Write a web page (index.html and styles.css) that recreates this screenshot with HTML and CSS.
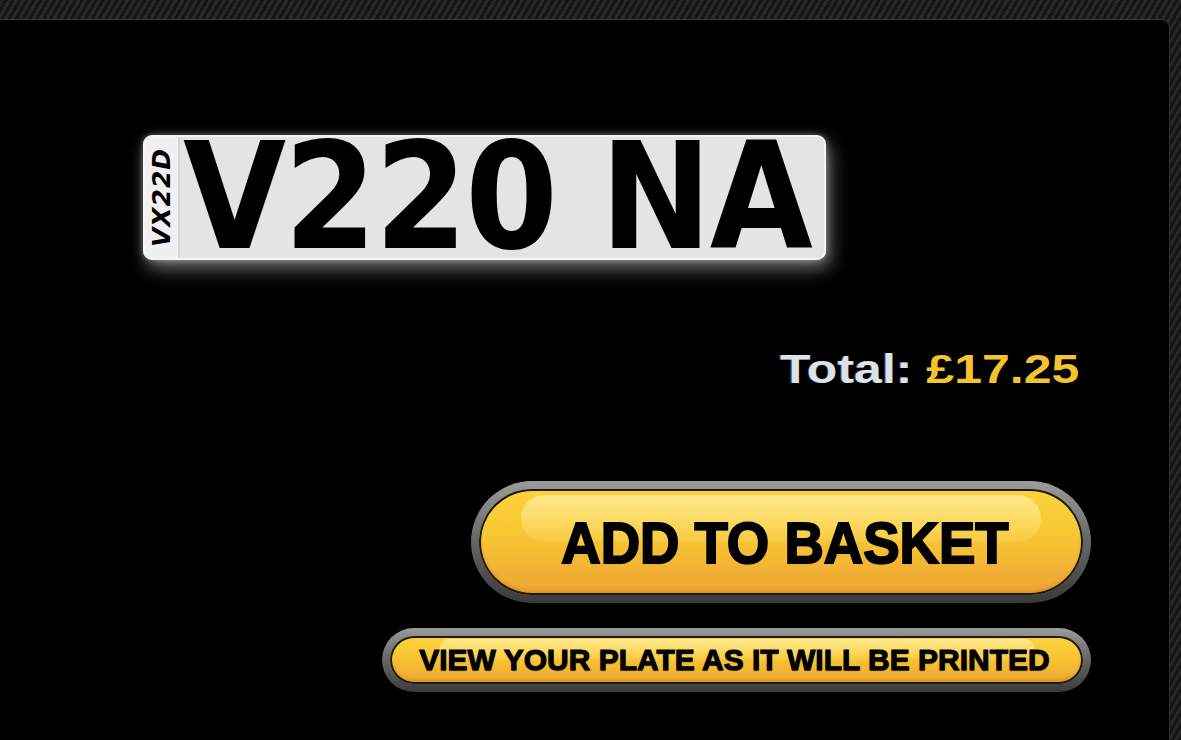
FILE: index.html
```html
<!DOCTYPE html>
<html lang="en">
<head>
    <meta charset="UTF-8">
    <meta name="viewport" content="width=device-width, initial-scale=1.0">
    <title>Plate Builder - Your Plate</title>
    <link rel="stylesheet" href="styles.css">
</head>
<body>
    <div class="panel">
        <div class="plate">
            <div class="plate-badge"><span>VX22D</span></div>
            <div class="plate-text">V220 NA</div>
        </div>

        <div class="total">
            <span class="total-inner">Total: <span class="price">£17.25</span></span>
        </div>

        <div class="actions">
            <div class="btn-rim btn-big">
                <button type="button" class="btn"><span class="btn-label">ADD TO BASKET</span></button>
            </div>
            <div class="btn-rim btn-small">
                <button type="button" class="btn"><span class="btn-label">VIEW YOUR PLATE AS IT WILL BE PRINTED</span></button>
            </div>
        </div>
    </div>
</body>
</html>
```

FILE: styles.css
```css
body {
    margin: 0;
    font-family: 'Liberation Sans', Arial, sans-serif;
    background: repeating-linear-gradient(-60deg, #141514 0px, #141514 3px, #272827 3px, #272827 6px);
    min-height: 100vh;
    overflow: hidden;
}

.panel {
    margin: 19px 11px 0 0;
    min-height: calc(100vh - 19px);
    box-sizing: border-box;
    background: #000;
    border-top: 1px solid #3a3a3a;
    border-right: 1px solid #2e2e2e;
    border-top-right-radius: 9px;
    padding: 115px 78px 0 143px;
}

/* number plate */
.plate {
    display: flex;
    width: 683px;
    height: 125px;
    box-sizing: border-box;
    background: #e4e4e4;
    border: 2px solid #f4f4f4;
    border-radius: 9px;
    box-shadow: 4px 8px 18px rgba(255, 255, 255, 0.45), 0 0 6px rgba(255, 255, 255, 0.35);
}

.plate-badge {
    width: 33px;
    display: flex;
    align-items: center;
    justify-content: center;
    border-right: 2px solid #d6d6d6;
    background: #f0f0f0;
    border-radius: 7px 0 0 7px;
}

.plate-badge span {
    display: block;
    transform: rotate(-90deg);
    font-family: 'DejaVu Sans', sans-serif;
    font-weight: bold;
    font-style: italic;
    font-size: 25px;
    letter-spacing: 1px;
    color: #000;
    white-space: nowrap;
}

.plate-text {
    flex: 1;
    font-family: 'DejaVu Sans Condensed', 'DejaVu Sans', sans-serif;
    font-stretch: condensed;
    font-weight: bold;
    font-size: 148px;
    line-height: 121px;
    color: #000;
    padding-left: 3px;
    letter-spacing: -2px;
    white-space: nowrap;
}

/* total */
.total {
    display: flex;
    justify-content: flex-end;
    margin: 86px 12px 0 0;
}

.total-inner {
    display: inline-block;
    font-size: 41px;
    font-weight: bold;
    color: #dde2e8;
    transform: scaleX(1.22);
    transform-origin: right center;
    text-shadow: -1px 0 0 rgba(120, 200, 255, 0.35);
}

.price {
    color: #f3c42c;
    text-shadow: none;
}

/* buttons */
.actions {
    display: flex;
    flex-direction: column;
    align-items: flex-end;
    gap: 25px;
    margin-top: 88px;
}

.btn-rim {
    box-sizing: border-box;
    padding: 8px;
    border-radius: 999px;
    background: linear-gradient(180deg, #9c9c9c 0%, #6a6a6a 45%, #3a3a3a 100%);
    box-shadow: 0 3px 4px rgba(0, 0, 0, 0.8);
}

.btn {
    position: relative;
    display: flex;
    align-items: center;
    justify-content: center;
    width: 100%;
    height: 100%;
    border: none;
    padding: 0;
    border-radius: 999px;
    background: linear-gradient(180deg, #fbd23c 0%, #f8c834 40%, #f3b635 70%, #eba432 100%);
    box-shadow: inset 0 0 0 2px #1e1a10, inset 0 -3px 4px rgba(150, 90, 0, 0.35);
    cursor: pointer;
    overflow: hidden;
    font-family: 'Liberation Sans', Arial, sans-serif;
}

.btn::before {
    content: '';
    position: absolute;
    left: 7%;
    right: 7%;
    top: 6%;
    height: 44%;
    border-radius: 999px;
    background: linear-gradient(180deg, rgba(255, 240, 170, 0.75), rgba(255, 230, 120, 0.15));
}

.btn-label {
    position: relative;
    display: inline-block;
    color: #000;
    font-weight: bold;
    white-space: nowrap;
    -webkit-text-stroke: 2px #000;
    text-shadow: 0 1px 1px rgba(0, 0, 0, 0.5);
}

.btn-big {
    width: 620px;
    height: 122px;
}

.btn-big .btn-label {
    font-size: 58px;
    transform: scaleX(0.94);
    margin-left: 8px;
}

.btn-small {
    width: 709px;
    height: 64px;
}

.btn-small .btn-label {
    font-size: 30px;
    -webkit-text-stroke: 1px #000;
    transform: scaleX(1);
    margin-left: -4px;
}
```
